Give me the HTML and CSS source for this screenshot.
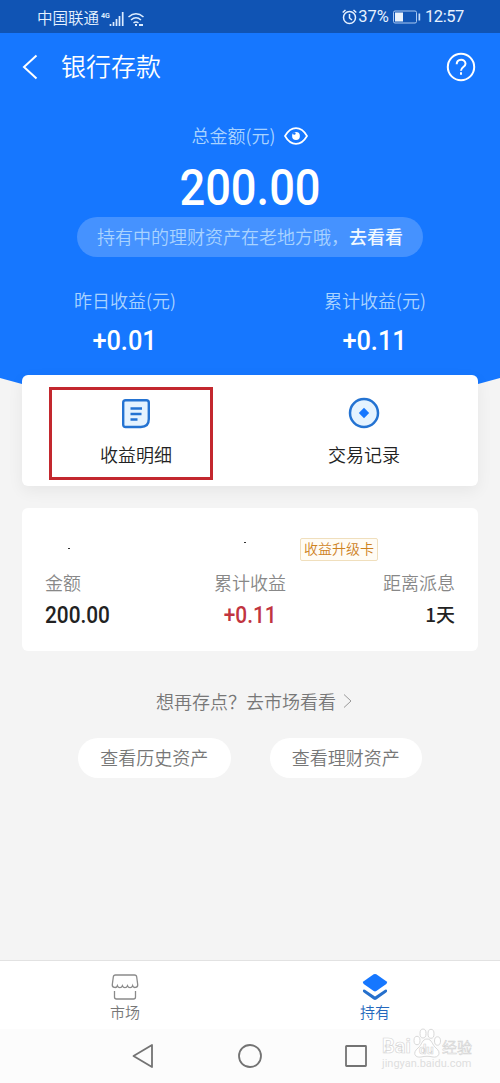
FILE: index.html
```html
<!DOCTYPE html>
<html lang="zh-CN">
<head>
<meta charset="utf-8">
<title>银行存款</title>
<link rel="stylesheet" href="styles.css">
</head>
<body>
<div class="status">
  <span class="carrier">中国联通</span>
  <svg class="signal" width="44" height="20" viewBox="0 0 44 20" fill="none" stroke="#dcecff">
    <text x="0" y="9" class="net" textLength="9" lengthAdjust="spacingAndGlyphs">4G</text>
    <path d="M9.500 15v2M12.500 13v4M15.500 10v7M18.500 7v10M21.700 3v14" stroke-width="1.700"/>
    <path d="M27.500 8q7.500-6.500 15 0M30 11q5-4.500 10 0M32.500 14q2.500-2 5 0" stroke-width="1.500"/>
    <path d="M34 16h2M38 16h4" stroke-width="2"/>
  </svg>
  <svg class="alarm" width="15" height="16" viewBox="0 0 15 16" fill="none" stroke="#e6f1ff" stroke-width="1.500"><circle cx="7.500" cy="8.500" r="6"/><path d="M7.500 5v4l2.500 2M.7 3.500 3.500 1M14.300 3.500 11.500 1"/></svg>
  <span class="percent">37%</span>
  <svg class="battery" width="28" height="14" viewBox="0 0 28 14"><rect x=".5" y="1" width="23" height="12" rx="1.500" fill="none" stroke="#a9c8f2"/><path d="M2 2.500h8v9H2z" fill="#eaf2fb"/><path d="M25.500 3.500h1.700v7h-1.700z" fill="#c4dcfa"/></svg>
  <span class="clock">12:57</span>
</div>
<header class="header">
  <svg width="16" height="26" viewBox="0 0 16 26" fill="none" stroke="#fff" stroke-width="2"><path d="m14.500 1.500-12.500 11.500 12.500 11.500"/></svg>
  <h1 class="title">银行存款</h1>
  <svg width="30" height="30" viewBox="0 0 30 30" fill="none" stroke="#fff" stroke-width="2"><circle cx="15" cy="15" r="13.200"/><path d="M10.700 12.300c0-6 8.800-6 8.800-.6 0 3.500-4.500 3.200-4.500 7M15 20.300v2.500"/></svg>
</header>
<section class="hero">
  <div class="total-label"><span>总金额(元)</span>
    <svg width="24" height="18" viewBox="0 0 24 18" fill="none" stroke="#fff" stroke-width="1.700"><path d="M1 9C7-1.500 17-1.500 23 9 17 19.500 7 19.500 1 9z"/><circle cx="12" cy="9" r="3.900" fill="#fff" stroke="none"/><circle cx="10.300" cy="6.500" r="1.300" fill="#1677ff" stroke="none"/></svg>
  </div>
  <div class="total"><span class="num">200.00</span></div>
  <div class="notice">持有中的理财资产在老地方哦，<b>去看看</b></div>
  <div class="earnings">
    <div class="earning"><span>昨日收益(元)</span><strong class="num">+0.01</strong></div>
    <div class="earning"><span>累计收益(元)</span><strong class="num">+0.11</strong></div>
  </div>
</section>
<main class="content">
  <section class="card actions">
    <div class="action marked">
      <svg width="30" height="32" viewBox="0 0 30 32" fill="none" stroke="#2473d2" stroke-width="2.400"><path d="M4.700 2.300h20.600q2.500 0 2.500 2.500V21q0 8-8 8H4.700q-2.500 0-2.500-2.500V4.800q0-2.500 2.500-2.500z" fill="#e5f3ff"/><path d="M9.500 10.500h11.500M9.500 16h11M9.500 21.500h7"/></svg>
      <span>收益明细</span>
    </div>
    <div class="action">
      <svg width="32" height="32" viewBox="0 0 32 32"><circle cx="16" cy="16" r="14" fill="#e5f3ff" stroke="#2473d2" stroke-width="2.500"/><path d="m16 10.800 5.200 5.200-5.200 5.200-5.200-5.200z" fill="#1677ff"/></svg>
      <span>交易记录</span>
    </div>
  </section>
  <section class="card deposit">
    <div class="product"><i class="speck"></i><i class="speck second"></i><span class="tag">收益升级卡</span></div>
    <div class="stats">
      <div class="stat"><span>金额</span><strong class="num">200.00</strong></div>
      <div class="stat middle"><span>累计收益</span><strong class="num">+0.11</strong></div>
      <div class="stat end"><span>距离派息</span><strong class="days">1天</strong></div>
    </div>
  </section>
  <div class="market-link">想再存点？去市场看看<svg width="9" height="16" viewBox="0 0 9 16" fill="none" stroke="#999"><path d="m1 1.500 7 6.500-7 6.500"/></svg></div>
  <div class="pills"><span class="pill">查看历史资产</span><span class="pill">查看理财资产</span></div>
</main>
<nav class="tabs">
  <div class="tab">
    <svg width="28" height="28" viewBox="0 0 28 28" fill="none" stroke="#8a8a8a" stroke-width="1.300"><path d="M4.500 2h19q2 0 2.200 2l1 7.500c.4 3.500-4.400 4-5.100 1.200-1 2.600-4.100 2.600-5.100 0-1 2.600-4.100 2.600-5.100 0-1 2.600-4 2.600-5 0-.8 2.800-5.500 2.300-5.100-1.200L2.300 4Q2.500 2 4.500 2zM3.500 18v6q0 2 2 2h17q2 0 2-2v-6"/></svg>
    <span>市场</span>
  </div>
  <div class="tab active">
    <svg width="28" height="28" viewBox="0 0 28 28"><path d="M12.700 1.300q1.300-.8 2.600 0l10 7q1.800 1.300 0 2.600l-10 7.200q-1.300.8-2.600 0l-10-7.200q-1.800-1.300 0-2.600z" fill="#1677ff"/><path d="M2 17q.7-1 2-.2l10 6.700 10-6.700q1.300-.8 2 .2.500 1.600-.8 2.500l-9.800 7q-1.400.9-2.800 0l-9.800-7q-1.300-.9-.8-2.500z" fill="#2670cc"/></svg>
    <span>持有</span>
  </div>
</nav>
<div class="system">
  <svg width="22" height="26" viewBox="0 0 22 26" fill="none" stroke="#737373" stroke-width="1.800" stroke-linejoin="round"><path d="M20 2v22L1.500 13z"/></svg>
  <svg width="26" height="26" viewBox="0 0 26 26" fill="none" stroke="#737373" stroke-width="1.800"><circle cx="13" cy="13" r="11"/></svg>
  <svg width="24" height="24" viewBox="0 0 24 24" fill="none" stroke="#737373" stroke-width="1.800"><rect x="2" y="2" width="20" height="20" rx=".5"/></svg>
  <div class="watermark">
    <div class="logo">
      <span class="brand">Bai</span>
      <span class="paw"><svg width="28" height="30" viewBox="0 0 28 30" fill="#fff" stroke="#d9d9d9"><path d="M14 11c5 0 5 6 9 9 6 5 2 10-3 9-4-1-8-1-12 0-6 1-9-4-3-9 4-3 4-9 9-9z"/><ellipse cx="4" cy="12.500" rx="3" ry="4.200"/><ellipse cx="10" cy="5.500" rx="3" ry="4.500"/><ellipse cx="18" cy="5.800" rx="3" ry="4.500"/><ellipse cx="24.500" cy="13" rx="3" ry="4.200"/></svg><span class="du">du</span></span>
      <span class="cn">经验</span>
    </div>
    <span class="site">jingyan.baidu.com</span>
  </div>
</div>
</body>
</html>
```

FILE: styles.css
```css
* { box-sizing: border-box; }
body { margin: 0; width: 500px; height: 1083px; display: flex; flex-direction: column; overflow: hidden; background: #f4f4f4; color: #222; font: 350 18px/24px "Noto Sans CJK SC DemiLight", "Noto Sans CJK SC", sans-serif; }
svg { display: block; flex: none; }
.num { display: inline-block; font-family: Roboto, sans-serif; font-weight: 500; transform: scaleX(.905); white-space: nowrap; }
.status { height: 33px; flex: none; display: flex; align-items: center; padding: 1px 36px 0 37px; background: #1054b4; color: #e6f1ff; font-size: 15.500px; }
.carrier { line-height: 22px; margin-top: -1px; }
.signal { margin: 4px 0 0 2px; }
.net { font: 700 8px Roboto, sans-serif; fill: #dcecff; stroke: none; }
.alarm { margin-left: auto; }
.percent, .clock { font: 400 16.500px/20px Roboto, sans-serif; }
.clock { letter-spacing: -.4px; }
.percent { margin: 0 4px 0 1px; }
.clock { margin-left: 4px; }
.header { height: 67px; flex: none; display: flex; align-items: center; padding: 0 24px 0 22px; background: #1677ff; }
.title { margin: -3px auto 0 23px; font-size: 25px; line-height: 34px; font-weight: 350; color: #fff; }
.hero { height: 285px; flex: none; padding-top: 24px; display: flex; flex-direction: column; align-items: center; color: #a9d3ff; background: #1677ff; clip-path: polygon(0 0, 100% 0, 100% 278px, 95.600% 284px, 4.400% 284px, 0 278px); }
.total-label { display: flex; align-items: center; gap: 9px; }
.total-label span { margin-top: -1px; }
.total { height: 70px; display: flex; align-items: center; color: #fff; font-size: 50px; padding-top: 12px; }
.notice { width: 346px; height: 40px; border-radius: 20px; background: #4592ff; line-height: 39px; padding-left: 20px; white-space: nowrap; }
.notice b { font-family: "Noto Sans CJK SC", sans-serif; font-weight: 500; color: #f1f8ff; }
.earnings { align-self: stretch; display: grid; grid-template-columns: 1fr 1fr; margin-top: 31px; }
.earning { display: flex; flex-direction: column; align-items: center; }
.earning .num { margin-top: 11px; color: #fff; font-size: 28px; line-height: 36px; }
.content { margin-top: -10px; padding: 0 22px; height: 585px; flex: none; position: relative; }
.card { background: #fff; border-radius: 6px; }
.actions { height: 111px; display: grid; grid-template-columns: 1fr 1fr; box-shadow: 0 5px 16px rgba(0,0,0,.06); }
.action { display: flex; flex-direction: column; align-items: center; gap: 13px; padding-top: 22px; }
.action span { line-height: 24px; }
.marked { width: 164px; height: 93px; margin: 12px 0 0 27px; padding: 8px 0 0 10px; gap: 12px; border: 3px solid #c3282e; }
.deposit { height: 143px; margin-top: 22px; padding: 30px 23px 0; }
.product { height: 23px; display: flex; align-items: flex-start; }
.speck { width: 2px; height: 1px; background: #333; margin: 10px 0 0 23px; }
.second { margin: 4px 0 0 174px; }
.tag { margin-left: 54px; width: 78px; height: 23px; border: 1px solid #f0dfbd; border-radius: 2px; background: #fffcf5; color: #ce821e; font-size: 14px; line-height: 19px; text-align: center; }
.stats { display: grid; grid-template-columns: 1fr 1fr 1fr; margin-top: 9px; color: #888; }
.stat { display: flex; flex-direction: column; align-items: flex-start; }
.stat strong { margin-top: 7px; line-height: 30px; color: #222; font-size: 23px; }
.stat .num { transform-origin: left; }
.stat.middle .num { color: #c13440; transform-origin: center; }
.middle { align-items: center; }
.end { align-items: flex-end; }
.stat .days { font-family: "Noto Sans CJK SC", sans-serif; font-size: 19px; font-weight: 500; line-height: 26px; }
.market-link { display: flex; justify-content: center; align-items: center; gap: 7px; margin-top: 38px; padding-left: 8px; color: #777; }
.pills { display: flex; justify-content: center; gap: 39px; margin-top: 25px; }
.pill { width: 152.500px; height: 40px; border-radius: 20px; background: #fff; color: #777; text-align: center; line-height: 39px; }
.tabs { height: 69px; flex: none; display: grid; grid-template-columns: 1fr 1fr; background: #fff; border-top: 1px solid #e2e2e2; }
.tab { display: flex; flex-direction: column; align-items: center; padding-top: 12px; color: #777; font-size: 15px; line-height: 22px; }
.active { color: #2468bd; }
.system { height: 54px; position: relative; display: flex; align-items: center; padding-left: 132px; gap: 84px; background: #fcfcfc; }
.system > svg:nth-child(2) { margin-left: -1px; }
.system > svg:nth-child(3) { margin-left: -3px; }
.watermark { position: absolute; left: 382px; top: -1px; width: 92px; color: #fff; }
.logo { height: 30px; display: flex; align-items: flex-end; gap: 1px; -webkit-text-stroke: .6px #d4d4d4; }
.brand { width: 30px; font: 700 20px/23px Roboto, sans-serif; }
.paw { position: relative; width: 28px; height: 30px; }
.du { position: absolute; left: 6px; top: 14px; font: 700 13px/15px Roboto, sans-serif; }
.cn { font-size: 15px; line-height: 22px; font-weight: 500; }
.site { display: block; font: 400 11px/12px Roboto, sans-serif; color: #dedede; }
```
